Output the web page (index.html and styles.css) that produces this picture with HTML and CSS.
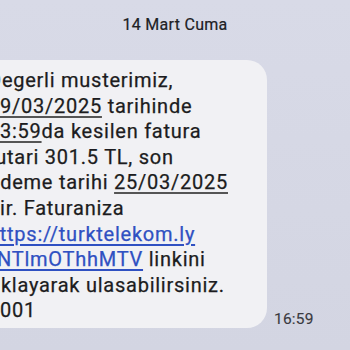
FILE: index.html
```html
<!DOCTYPE html>
<html>
<head>
    <title>Mesajlar</title>
    <link rel="stylesheet" href="styles.css">
</head>
<body>
    <div class="thread">
        <div class="day">14 Mart Cuma</div>
        <div class="row">
            <div class="bubble">
                Degerli musterimiz,<br>
                <span class="u">19/03/2025</span> tarihinde<br>
                <span class="u">23:59</span>da kesilen fatura<br>
                tutari 301.5 TL, son<br>
                odeme tarihi <span class="u">25/03/2025</span><br>
                dir. Faturaniza<br>
                <a class="link" href="#">https://turktelekom.ly<br>/NTlmOThhMTV</a> linkini<br>
                tiklayarak ulasabilirsiniz.<br>
                4001
            </div>
            <span class="time">16:59</span>
        </div>
    </div>
</body>
</html>
```
FILE: styles.css
```css
body {
    margin: 0;
    height: 350px;
    overflow: hidden;
    background: linear-gradient(#d8dae7, #d3d5e2);
    font-family: Roboto, "Noto Sans", sans-serif;
    color: #1c1c20;
}

.day {
    padding-top: 15px;
    text-align: center;
    font-size: 16px;
    line-height: 20px;
    letter-spacing: 0.3px;
    color: #202124;
    -webkit-text-stroke: 0.2px #202124;
}

.row {
    display: flex;
    align-items: flex-end;
    margin-top: 25px;
    margin-left: -30px;
}

.bubble {
    box-sizing: border-box;
    width: 297px;
    padding: 8px 10px 4px 18px;
    background: #f1f1f4;
    border-radius: 20px;
    font-size: 20px;
    line-height: 25.6px;
    letter-spacing: 0.75px;
    -webkit-text-stroke: 0.25px #1c1c20;
}

.u {
    text-decoration: underline;
    text-decoration-color: #555;
    text-decoration-thickness: 1.5px;
    text-underline-offset: 3px;
}

.link {
    color: #2f50c2;
    -webkit-text-stroke: 0.25px #2f50c2;
    text-decoration: underline;
    text-decoration-thickness: 1.5px;
    text-underline-offset: 3px;
}

.time {
    margin-left: 7px;
    font-size: 15.5px;
    color: #3a3a3f;
    letter-spacing: 0.2px;
    -webkit-text-stroke: 0.15px #3a3a3f;
}
```
